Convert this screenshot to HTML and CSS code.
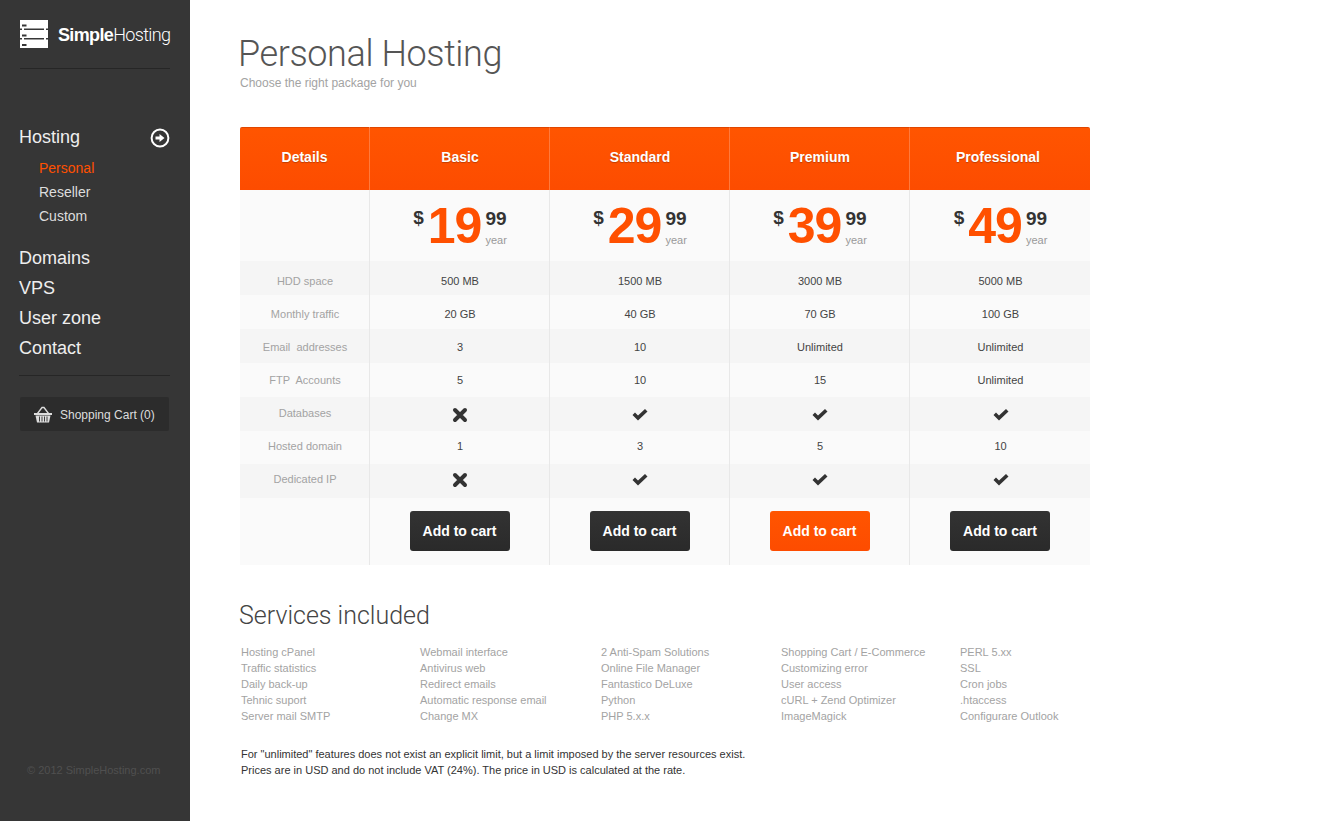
FILE: index.html
```html
<!DOCTYPE html>
<html lang="en">
<head>
  <meta charset="UTF-8">
  <title>SimpleHosting</title>
  <link rel="stylesheet" href="styles.css">
</head>
<body>

  <aside class="sidebar">
    <div class="logo">
      <svg class="logo-icon" width="28" height="28" viewBox="0 0 28 28">
        <rect width="28" height="28" fill="#fff"/>
        <path d="M0 8.500h2V10H0zM4 8.500h20V10H4zM26 8.500h2V10h-2zM0 18h2v1.500H0zM4 18h20v1.500H4zM26 18h2v1.500h-2z" fill="#363636"/>
        <path d="M2 4.500h4.500v2H2zM2 14.500h4.500v2H2zM2 24h4.500v2H2z" fill="#363636"/>
      </svg>
      <span class="logo-text"><b>Simple</b>Hosting</span>
    </div>

    <nav class="nav">
      <div class="nav-head">
        <a class="nav-link">Hosting</a>
        <svg class="nav-arrow" width="20" height="20" viewBox="0 0 20 20">
          <circle cx="10" cy="10" r="8.400" fill="none" stroke="#fff" stroke-width="2"/>
          <path d="M5.500 8.500h4V6l5 4-5 4v-2.500h-4z" fill="#fff"/>
        </svg>
      </div>
      <ul class="subnav">
        <li class="current">Personal</li>
        <li>Reseller</li>
        <li>Custom</li>
      </ul>
      <a class="nav-link">Domains</a>
      <a class="nav-link">VPS</a>
      <a class="nav-link">User zone</a>
      <a class="nav-link">Contact</a>
    </nav>

    <div class="cart">
      <svg width="18" height="17" viewBox="0 0 18 17">
        <path d="M3.500 7.500L8 1.500h2l4.500 6" fill="none" stroke="#ddd" stroke-width="1.300"/>
        <path d="M0 7h18v2H0z" fill="#ddd"/>
        <path d="M1.500 9.500h15L15 16.500H3z" fill="#ddd"/>
        <path d="M5.500 10.500v5M8 10.500v5M10.500 10.500v5M13 10.500v5" stroke="#2c2c2c" stroke-width="0.900"/>
      </svg>
      <span class="cart-label">Shopping Cart (0)</span>
    </div>

    <div class="copyright">© 2012 SimpleHosting.com</div>
  </aside>

  <main class="content">
    <h1>Personal Hosting</h1>
    <p class="lead">Choose the right package for you</p>

    <table class="pricing">
      <thead>
        <tr>
          <th>Details</th>
          <th>Basic</th>
          <th>Standard</th>
          <th>Premium</th>
          <th>Professional</th>
        </tr>
      </thead>
      <tbody>
        <tr class="prices">
          <td></td>
          <td><div class="price"><span class="cur">$</span><span class="big">19</span><span class="rest"><b>99</b><i>year</i></span></div></td>
          <td><div class="price"><span class="cur">$</span><span class="big">29</span><span class="rest"><b>99</b><i>year</i></span></div></td>
          <td><div class="price"><span class="cur">$</span><span class="big">39</span><span class="rest"><b>99</b><i>year</i></span></div></td>
          <td><div class="price"><span class="cur">$</span><span class="big">49</span><span class="rest"><b>99</b><i>year</i></span></div></td>
        </tr>
        <tr class="dark r1"><td>HDD space</td><td>500 MB</td><td>1500 MB</td><td>3000 MB</td><td>5000 MB</td></tr>
        <tr class="r1b"><td>Monthly traffic</td><td>20 GB</td><td>40 GB</td><td>70 GB</td><td>100 GB</td></tr>
        <tr class="dark r2"><td>Email&nbsp; addresses</td><td>3</td><td>10</td><td>Unlimited</td><td>Unlimited</td></tr>
        <tr><td>FTP&nbsp; Accounts</td><td>5</td><td>10</td><td>15</td><td>Unlimited</td></tr>
        <tr class="dark r5">
          <td>Databases</td>
          <td><svg class="ico" width="16" height="16" viewBox="0 0 16 16"><use href="#no"/></svg></td>
          <td><svg class="ico" width="16" height="16" viewBox="0 0 16 16"><use href="#yes"/></svg></td>
          <td><svg class="ico" width="16" height="16" viewBox="0 0 16 16"><use href="#yes"/></svg></td>
          <td><svg class="ico" width="16" height="16" viewBox="0 0 16 16"><use href="#yes"/></svg></td>
        </tr>
        <tr class="r6"><td>Hosted domain</td><td>1</td><td>3</td><td>5</td><td>10</td></tr>
        <tr class="dark r7">
          <td>Dedicated IP</td>
          <td><svg class="ico" width="16" height="16" viewBox="0 0 16 16"><use href="#no"/></svg></td>
          <td><svg class="ico" width="16" height="16" viewBox="0 0 16 16"><use href="#yes"/></svg></td>
          <td><svg class="ico" width="16" height="16" viewBox="0 0 16 16"><use href="#yes"/></svg></td>
          <td><svg class="ico" width="16" height="16" viewBox="0 0 16 16"><use href="#yes"/></svg></td>
        </tr>
        <tr class="actions">
          <td></td>
          <td><button class="btn">Add to cart</button></td>
          <td><button class="btn">Add to cart</button></td>
          <td><button class="btn btn-hot">Add to cart</button></td>
          <td><button class="btn">Add to cart</button></td>
        </tr>
      </tbody>
    </table>

    <h2>Services included</h2>
    <div class="services">
      <ul><li>Hosting cPanel</li><li>Traffic statistics</li><li>Daily back-up</li><li>Tehnic suport</li><li>Server mail SMTP</li></ul>
      <ul><li>Webmail interface</li><li>Antivirus web</li><li>Redirect emails</li><li>Automatic response email</li><li>Change MX</li></ul>
      <ul><li>2 Anti-Spam Solutions</li><li>Online File Manager</li><li>Fantastico DeLuxe</li><li>Python</li><li>PHP 5.x.x</li></ul>
      <ul><li>Shopping Cart / E-Commerce</li><li>Customizing error</li><li>User access</li><li>cURL + Zend Optimizer</li><li>ImageMagick</li></ul>
      <ul><li>PERL 5.xx</li><li>SSL</li><li>Cron jobs</li><li>.htaccess</li><li>Configurare Outlook</li></ul>
    </div>

    <p class="note">For "unlimited" features does not exist an explicit limit, but a limit imposed by the server resources exist.<br>Prices are in USD and do not include VAT (24%). The price in USD is calculated at the rate.</p>
  </main>

  <svg class="defs" width="0" height="0">
    <defs>
      <path id="yes" d="M.5 8L3 5.500l3 3L13 2l2.500 2.500-9.500 9z" fill="#333"/>
      <path id="no" d="M3 3l10 10M13 3L3 13" fill="none" stroke="#333" stroke-width="4" stroke-linecap="round"/>
    </defs>
  </svg>

</body>
</html>
```

FILE: styles.css
```css
* {
  box-sizing: border-box;
}

body {
  margin: 0;
  height: 100vh;
  overflow: hidden;
  display: flex;
  background: #fff;
  font-family: "Liberation Sans", Arial, sans-serif;
  color: #333;
}

ul {
  list-style: none;
  margin: 0;
  padding: 0;
}

.defs {
  position: absolute;
}

/* sidebar */
.sidebar {
  width: 190px;
  flex: none;
  display: flex;
  flex-direction: column;
  padding: 20px 20px 0 20px;
  background: #363636;
  color: #fff;
}

.logo {
  display: flex;
  align-items: center;
  gap: 10px;
  padding-bottom: 20px;
  border-bottom: 1px solid #262626;
}

.logo-icon {
  flex: none;
}

.logo-text {
  padding-top: 2px;
  font-family: Roboto, "Liberation Sans", sans-serif;
  font-size: 18px;
  font-weight: 300;
  letter-spacing: -0.650px;
  white-space: nowrap;
}

.logo-text b {
  font-family: "Liberation Sans", sans-serif;
  font-weight: 700;
}

.nav {
  margin: 53px 0 0 -1px;
  padding-bottom: 12px;
  border-bottom: 1px solid #262626;
}

.nav-link {
  display: block;
  height: 30px;
  line-height: 30px;
  font-size: 18px;
  color: #eee;
}

.nav-head {
  display: flex;
  justify-content: space-between;
  align-items: center;
}

.nav-arrow {
  margin: 2px 0 0 0;
}

.subnav {
  padding: 4px 0 15px 20px;
  font-size: 14px;
  color: #ddd;
}

.subnav li {
  height: 24px;
  line-height: 24px;
}

.subnav .current {
  color: #ff5000;
}

.cart {
  display: flex;
  align-items: center;
  gap: 8px;
  width: 149px;
  height: 34px;
  margin-top: 21px;
  padding-left: 14px;
  border-radius: 2px;
  background: #2c2c2c;
  color: #ddd;
  font-size: 12px;
}

.cart-label {
  padding-top: 2px;
}

.copyright {
  margin-top: auto;
  padding: 0 0 45px 7px;
  font-size: 11px;
  color: #505050;
  white-space: nowrap;
}

/* main column */
.content {
  flex: 1;
  padding: 32px 0 0 50px;
}

h1 {
  margin: 0 0 0 -2px;
  font-family: Roboto, "Liberation Sans", sans-serif;
  font-size: 36px;
  line-height: 44px;
  font-weight: 300;
  letter-spacing: -0.400px;
  color: #555;
}

.lead {
  margin: 0 0 37px 0;
  font-size: 12px;
  line-height: 14px;
  color: #a3a3a3;
}

/* pricing table */
.pricing {
  width: 850px;
  border-collapse: separate;
  border-spacing: 0;
  table-layout: fixed;
  font-size: 11px;
  text-align: center;
  color: #444;
}

.pricing th {
  height: 63px;
  padding: 0 0 4px 1px;
  border-top: 1px solid #e04600;
  border-right: 1px solid #ff7a3c;
  background: linear-gradient(#ff5500, #fd4c00);
  color: #fff;
  font-size: 14px;
  font-weight: 700;
  text-shadow: 0 1px 1px rgba(0, 0, 0, 0.25);
}

.pricing th:first-child {
  width: 130px;
  padding-left: 0;
  border-top-left-radius: 2px;
}

.pricing th:last-child {
  padding-right: 5px;
  border-right: 0;
  border-top-right-radius: 2px;
}

.pricing td {
  height: 34px;
  padding: 0 0 0 1px;
  border-right: 1px solid #e8e8e8;
  background: #fafafa;
}

.pricing td:last-child {
  border-right: 0;
}

.pricing td:first-child {
  color: #a3a3a3;
}

.pricing .dark td {
  background: #f5f5f5;
}

.pricing .prices td {
  height: 71px;
}

.pricing .actions td {
  height: 67px;
  padding: 0 0 2px 0;
}

/* the rows are taller than the 33px pitch of their text */
.pricing .r1 td {
  padding-top: 5px;
}

.pricing .r1b td {
  padding-top: 4px;
}

.pricing .r2 td {
  padding-top: 2px;
}

.pricing .r5 td {
  padding-top: 2px;
}

.pricing .r5 td:first-child {
  padding-top: 0;
  padding-bottom: 2px;
}

.pricing .r6 td {
  height: 33px;
  padding-bottom: 4px;
}

.pricing .r7 td {
  padding-bottom: 2px;
}

.pricing .r7 td:first-child {
  padding-bottom: 4px;
}

.ico {
  display: block;
  margin: 0 auto;
}

/* price block */
.price {
  display: flex;
  justify-content: center;
  align-items: flex-start;
  height: 52px;
  color: #333;
}

.cur {
  margin: 7px 4px 0 0;
  font-size: 19px;
  font-weight: 700;
}

.big {
  font-size: 50px;
  line-height: 52px;
  font-weight: 700;
  letter-spacing: -1px;
  color: #ff5000;
}

.rest {
  display: flex;
  flex-direction: column;
  align-items: flex-start;
  margin: 9px 0 0 4px;
}

.rest b {
  font-size: 19px;
  line-height: 20px;
}

.rest i {
  margin-top: 5px;
  font-style: normal;
  font-size: 11px;
  color: #999;
}

.btn {
  width: 100px;
  height: 40px;
  border: 0;
  border-radius: 3px;
  background: linear-gradient(#333, #2a2a2a);
  color: #fff;
  font-family: inherit;
  font-size: 14px;
  font-weight: 700;
}

.btn-hot {
  background: linear-gradient(#ff5500, #fd4c00);
}

/* services */
h2 {
  margin: 36px 0 0 -1px;
  font-family: Roboto, "Liberation Sans", sans-serif;
  font-size: 25px;
  line-height: 30px;
  font-weight: 300;
  color: #444;
}

.services {
  display: grid;
  grid-template-columns: 179px 181px 180px 179px 1fr;
  margin: 13px 0 0 1px;
  font-size: 11px;
  line-height: 16px;
  color: #a3a3a3;
}

.note {
  margin: 22px 0 0 1px;
  font-size: 11px;
  line-height: 16px;
  color: #333;
}
```
